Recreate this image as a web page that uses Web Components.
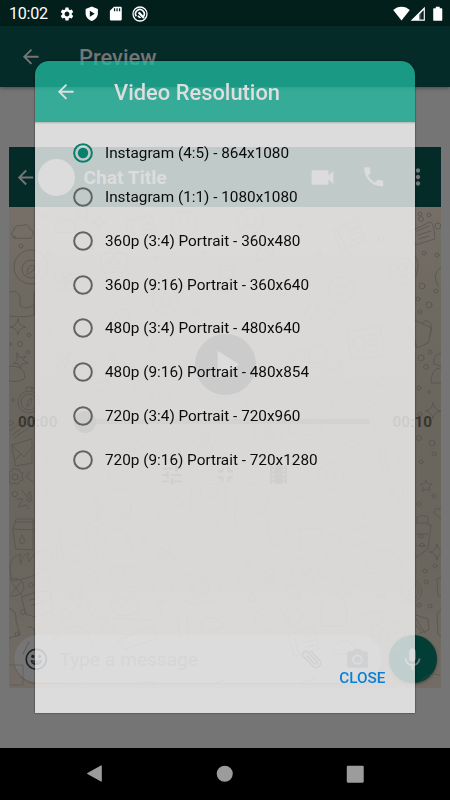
<!DOCTYPE html>
<html lang="en">
<head>
<meta charset="utf-8">
<title>Video Resolution</title>
<style>
html, body { margin: 0; height: 100%; overflow: hidden; background: #000; }
body { font-family: Roboto, "Liberation Sans", sans-serif; }
</style>
</head>
<body>
<app-screen></app-screen>
<script>
const ICONS = {
  back: '<path d="M20 11H7.83l5.59-5.59L12 4l-8 8 8 8 1.41-1.41L7.83 13H20z"/>',
  video: '<path d="M17 10.5V7c0-.55-.45-1-1-1H4c-.55 0-1 .45-1 1v10c0 .55.45 1 1 1h12c.55 0 1-.45 1-1v-3.500l4 4v-11z"/>',
  call: '<path d="M6.62 10.79c1.44 2.83 3.76 5.14 6.59 6.59l2.2-2.2c.27-.27.67-.36 1.02-.24 1.12.37 2.33.57 3.57.57.55 0 1 .45 1 1V20c0 .55-.45 1-1 1C10.61 21 3 13.39 3 4c0-.55.45-1 1-1h3.5c.55 0 1 .45 1 1 0 1.25.2 2.45.57 3.57.11.35.03.74-.25 1.02z"/>',
  more: '<path d="M12 8c1.1 0 2-.9 2-2s-.9-2-2-2-2 .9-2 2 .9 2 2 2zm0 2c-1.1 0-2 .9-2 2s.9 2 2 2 2-.9 2-2-.9-2-2-2zm0 6c-1.1 0-2 .9-2 2s.9 2 2 2 2-.9 2-2-.9-2-2-2z"/>',
  tune: '<path d="M3 17v2h6v-2zM3 5v2h10V5zm10 16v-2h8v-2h-8v-2h-2v6zM7 9v2H3v2h4v2h2V9zm14 4v-2H11v2zm-6-4h2V7h4V5h-4V3h-2z"/>',
  shrink: '<path d="M5 16h3v3h2v-5H5zm3-8H5v2h5V5H8zm6 11h2v-3h3v-2h-5zm2-11V5h-2v5h5V8z"/>',
  film: '<path d="M18 3v2h-2V3H8v2H6V3H4v18h2v-2h2v2h8v-2h2v2h2V3zM8 17H6v-2h2zm0-4H6v-2h2zm0-4H6V7h2zm10 8h-2v-2h2zm0-4h-2v-2h2zm0-4h-2V7h2z"/>',
  mic: '<path d="M12 14c1.66 0 2.99-1.34 2.99-3L15 5c0-1.66-1.34-3-3-3S9 3.34 9 5v6c0 1.66 1.34 3 3 3zm5.300-3c0 3-2.540 5.100-5.300 5.100S6.700 14 6.700 11H5c0 3.410 2.720 6.230 6 6.720V21h2v-3.280c3.280-.48 6-3.300 6-6.720z"/>',
  smile: '<path fill-rule="evenodd" d="M12 .5a11.500 11.500 0 1 0 0 23 11.500 11.500 0 0 0 0-23zm0 1.700a9.800 9.800 0 1 1 0 19.600 9.800 9.800 0 0 1 0-19.600z"/><circle cx="8.300" cy="9" r="1.700"/><circle cx="15.700" cy="9" r="1.700"/><path d="M6 12.900q6 1.600 12 0c-.5 7.300-11.500 7.300-12 0zm2 2.200q4 .8 8 0-.2-.5-.1-.8-3.900.7-7.800 0z" fill-rule="evenodd"/>',
  clip: '<g transform="rotate(-45 12 12)" fill="none" stroke="currentColor" stroke-width="1.600" stroke-linecap="round"><path d="M16.500 5.800v12a4.500 4.500 0 0 1-9 0V4.300a3.100 3.100 0 0 1 6.200 0v12.600a1.600 1.600 0 0 1-3.200 0V6"/></g>',
  camera: '<circle cx="12" cy="12" r="3.200"/><path d="M9 2L7.170 4H4c-1.100 0-2 .9-2 2v12c0 1.100.9 2 2 2h16c1.100 0 2-.9 2-2V6c0-1.100-.9-2-2-2h-3.170L15 2zm3 15c-2.760 0-5-2.240-5-5s2.240-5 5-5 5 2.240 5 5-2.240 5-5 5z"/>',
  play: '<path d="M8 5v14l11-7z"/>',
  gear: '<path d="M19.140 12.940c.04-.3.060-.61.060-.94s-.02-.64-.07-.94l2.030-1.580c.18-.14.23-.41.120-.61l-1.920-3.320c-.12-.22-.37-.29-.59-.22l-2.390.96c-.5-.38-1.030-.7-1.620-.94L14.400 2.810c-.04-.24-.24-.41-.48-.41h-3.840c-.24 0-.43.17-.47.41L9.250 5.350c-.59.24-1.130.57-1.620.94l-2.390-.96c-.22-.08-.47 0-.59.22L2.740 8.870c-.12.210-.08.470.12.610l2.030 1.580c-.05.3-.09.630-.09.940s.02.640.070.940l-2.030 1.580c-.18.14-.23.410-.12.610l1.920 3.320c.12.220.370.290.590.220l2.390-.96c.5.380 1.030.7 1.620.940l.36 2.540c.05.240.240.410.480.410h3.840c.24 0 .44-.17.470-.41l.36-2.540c.59-.24 1.130-.56 1.620-.94l2.390.96c.22.080.470 0 .59-.22l1.920-3.320c.12-.22.070-.47-.12-.61zM12 15.600c-1.980 0-3.600-1.620-3.600-3.600s1.620-3.600 3.600-3.600 3.600 1.620 3.600 3.600-1.620 3.600-3.600 3.600z"/>',
  shield: '<path fill-rule="evenodd" d="M12 .8L2.500 4.500V11c0 6 4 10.500 9.500 12.300 5.500-1.800 9.500-6.300 9.500-12.300V4.500zM9 7.300l7.600 4.700L9 16.700z"/>',
  sd: '<path fill-rule="evenodd" d="M20 1H9.500L3 7.500V21c0 1.100.9 2 2 2h15c1.100 0 2-.9 2-2V3c0-1.100-.9-2-2-2zM11.500 8.500h-2v-5h2zm4 0h-2v-5h2zm4 0h-2v-5h2z"/>',
  radar: '<circle cx="12" cy="12" r="10.500" fill="none" stroke="currentColor" stroke-width="1.900"/><path d="M6.500 15.500A6.500 6.500 0 1 1 16.800 16" fill="none" stroke="currentColor" stroke-width="2.500"/><path d="M8.500 10.500l3-1.800 7.500 8-2.200 2.400z"/><path d="M8 15.500q3 4 6 2.300l-4-4z"/>',
  wifi: '<path d="M12 22L.3 7.200C3.500 4.300 7.500 2.600 12 2.600s8.500 1.700 11.700 4.600z"/>',
  signal: '<path fill-rule="evenodd" d="M23 1v22H1zm-1.800 5.300L14.500 13v7.800h6.700z"/><path d="M14.500 13l3-3v10.800h-3z" opacity=".25"/>',
  battery: '<path d="M17.500 3.500H15V1H9v2.500H6.500C5.700 3.500 5 4.200 5 5v16.500c0 .8.700 1.500 1.500 1.500h11c.8 0 1.500-.7 1.500-1.500V5c0-.8-.7-1.500-1.500-1.500z"/>',
  navBack: '<path d="M20 2.500v19a.8.800 0 0 1-1.200.7L1.800 12.600a.7.700 0 0 1 0-1.200l17-9.600a.8.800 0 0 1 1.200.7z"/>',
  navHome: '<circle cx="12" cy="12" r="11"/>',
  navRecent: '<rect x="1" y="1" width="22" height="22" rx="1.500"/>'
};

function define(name, html, after) {
  const t = document.createElement('template');
  t.innerHTML = html;
  customElements.define(name, class extends HTMLElement {
    constructor() {
      super();
      this.attachShadow({ mode: 'open' }).append(t.content.cloneNode(true));
    }
    connectedCallback() { if (after) after(this, this.shadowRoot); }
  });
}

define('ui-icon', `
<style>:host{display:block;flex:none;width:var(--s,24px);height:var(--s,24px)}svg{display:block;width:100%;height:100%;fill:currentColor;overflow:visible}</style>
<svg viewBox="0 0 24 24"></svg>`, (el, root) => {
  el.style.setProperty('--s', (el.getAttribute('size') || 24) + 'px');
  root.querySelector('svg').innerHTML = ICONS[el.getAttribute('name')];
});

define('status-bar', `
<style>
:host{display:flex;align-items:center;height:26px;box-sizing:border-box;padding:1px 5px 0 9px;background:#021f1c;color:#fff}
.time{font-size:16.100px;line-height:20px;padding-top:1px;width:50px;letter-spacing:-.25px}
.l,.r{display:flex;align-items:center}.l{gap:8.700px}.r{margin-left:auto}
.r ui-icon:last-child{margin-left:4px}
</style>
<span class="time">10:02</span>
<div class="l"><ui-icon name="gear" size="16"></ui-icon><ui-icon name="shield" size="15.500"></ui-icon><ui-icon name="sd" size="15"></ui-icon><ui-icon name="radar" size="16"></ui-icon></div>
<div class="r"><ui-icon name="wifi" size="17"></ui-icon><ui-icon name="signal" size="15.500"></ui-icon><ui-icon name="battery" size="15.500"></ui-icon></div>`);

define('app-bar', `
<style>
:host{display:flex;align-items:center;height:61px;box-sizing:border-box;padding:1px 0 0 19px;gap:36.500px}
.t{font-size:21.900px;line-height:28px;padding-top:1px;font-weight:500;white-space:nowrap}
</style>
<ui-icon name="back" size="23.500"></ui-icon><span class="t"><slot></slot></span>`);

define('chat-header', `
<style>
:host{display:flex;align-items:center;height:60px;box-sizing:border-box;background:#042b28;color:#757575;padding:0 10px 0 5px}
.av{flex:none;width:37px;height:37px;border-radius:50%;background:#757575;margin-left:1px}
.n{font-size:19.200px;font-weight:700;margin-left:8.500px;flex:1;white-space:nowrap}
.call{margin-left:24px}.more{margin-left:19px}
</style>
<ui-icon name="back" size="23"></ui-icon><span class="av"></span><span class="n">Chat Title</span>
<ui-icon name="video" size="29"></ui-icon><ui-icon class="call" name="call" size="25.500"></ui-icon><ui-icon class="more" name="more" size="26"></ui-icon>`);

define('chat-wallpaper', `
<style>:host{display:block;background:linear-gradient(#756f68 0,#6e6961 18%,#6a665e 45%,#6a665e 75%,#726c65 100%)}svg{display:block;width:100%;height:100%;fill:none;stroke:#56524c;stroke-width:1;stroke-linecap:round;stroke-linejoin:round;opacity:.7}.mid,.dots{opacity:.7}</style>
<svg viewBox="9 207 432 481">
<defs>
<path id="star" d="M0-6l1.700 3.800 4.100.4-3 2.800.9 4.100L0 3-3.700 5.100l.9-4.100-3-2.800 4.100-.4z"/>
<path id="spark" d="M0-8q.8 7.200 8 8-7.200.8-8 8-.8-7.200-8-8 7.200-.8 8-8z"/>
<path id="cloud" d="M-8 6q-5-4 0-8 1-6 7-4 7-4 9 3 6 3 1 9z"/>
<g id="cam"><rect x="-13" y="-9" width="26" height="19" rx="4"/><circle r="6"/><circle r="3"/><path d="M-6-9l2-4h8l2 4"/></g>
<g id="flower"><circle r="2.500"/><circle cx="0" cy="-7" r="4"/><circle cx="7" cy="-2" r="4"/><circle cx="4" cy="6" r="4"/><circle cx="-4" cy="6" r="4"/><circle cx="-7" cy="-2" r="4"/></g>
<g id="clock"><circle r="11"/><circle r="8"/><path d="M-2 4l1-5 4-3-1 5z"/><path d="M-3-12v-3h6v3"/></g>
<g id="book"><path d="M-14-8l25-7 5 22-25 7zM-9-6l5 18M1-5l9-2M2 0l9-2M3 5l9-2"/></g>
<g id="face"><circle r="13"/><circle cx="-4" cy="-3" r="1"/><circle cx="4" cy="-3" r="1"/><path d="M-5 3q5 5 10 0"/></g>
<g id="pack"><path d="M-14 20v-25q2-12 14-12t14 12v25q-14 4-28 0zM-14 4q14 5 28 0M-5-17q0-6 5-6t5 6M-14 3h-5v14h5M14 3h5v14h-5"/></g>
<g id="cup"><path d="M-7-10h14l-2 22h-10zM-8-10l1-4h14l1 4M-6-2h12M-6 5h11"/></g>
<g id="leaf"><path d="M-10 9q-3-16 16-19 4 16-16 19zM-10 9L2-5"/></g>
<g id="note"><path d="M-4 5V-5l9-2V3"/><circle cx="-6" cy="5" r="2"/><circle cx="3" cy="3" r="2"/></g>
</defs>
<g class="left">
<use href="#cloud" x="22" y="232"/><circle cx="21" cy="246" r="2"/><circle cx="14" cy="237" r="1"/>
<circle cx="31" cy="267" r="17"/><circle cx="31" cy="269" r="9"/><path d="M27 272q2-9 8-6-1 6-8 8"/>
<path d="M10 292q8-3 10 6v8q7 4 14-1v10q-7 3-24 1M34 292v17"/>
<use href="#spark" x="18" y="327"/><circle cx="20" cy="344" r="2.500"/><circle cx="10" cy="344" r="1.500"/><circle cx="29" cy="335" r="1.800"/><circle cx="28" cy="352" r="1.800"/>
<path d="M17 353l3 5 6-2-3 4 5 3-6 1-2 5-2-6-5 1 4-4z"/>
<path d="M9 366q16-1 16 12-6 5-16 3z"/><circle cx="32" cy="388" r="1"/><circle cx="13" cy="400" r="1.500"/>
<use href="#clock" x="29" y="402"/><path d="M9 431l18-12 3 3-18 13M14 438l16-11"/><circle cx="11" cy="423" r="2.300"/>
<path d="M12 445l20-6v24l-16 3zM12 445l12 12 9-11M14 461l7-7"/>
<path d="M14 468l2 2 3-1 1 3 3 1-1 3 1 4-3 1-2 3-4-1-3 1-2-3v-9l3-1z"/><circle cx="15" cy="477" r="3"/><path d="M30 471l-4 6 7 5"/>
<circle cx="15" cy="494" r="2.800"/><circle cx="29" cy="500" r="2"/><path d="M22 490l5 7 3-6 2 8M17 499h6l-5 8 8-2 3 4"/>
<path d="M13 529l3-10h17v31l-17-1zM13 529l21 1M16 522h18"/><path d="M22 535q-5 8 0 9 5-1 0-9"/>
<path d="M10 568q-1-11 11-14-3 5 0 10 0-9 8-11-3 5 0 9 5-10 12-11l9 2q6 8-3 16-17 10-35 12z"/>
<path d="M10 579q14-3 14 9-2 9-14 8M12 583l10 13M22 581l-10 12"/><circle cx="31" cy="585" r="2.300"/>
<path d="M22 597l14-5 14-1 3 20-18 6-9-3zM30 600l12-3M32 605l12-3"/><circle cx="23" cy="612" r="2.500"/>
<path d="M9 608q8 2 7 13l4 14-11 3M28 627q8-1 7 8M29 642l-6 12"/><circle cx="17" cy="634" r="2"/>
</g>
<g class="right">
<circle cx="420" cy="214" r="2"/><circle cx="429" cy="215" r="2"/><circle cx="421" cy="219" r="2.500"/><circle cx="438" cy="226" r="3"/>
<path d="M411 231l19-9q4 0 5 17l-20 6zM417 231l12-5M418 235l13-4M419 239l10-3"/>
<circle cx="424" cy="253" r="2"/><circle cx="437" cy="255" r="2"/><path d="M415 256q6 7 1 20M441 267q-10 7-3 19"/><circle cx="422" cy="286" r="3"/><circle cx="436" cy="291" r="2"/><circle cx="418" cy="299" r="2"/><circle cx="429" cy="305" r="3"/><circle cx="420" cy="312" r="2"/>
<path d="M414 320l18 8-4 15-11 5-8-22M422 324q3-7 9 0l-1 12"/>
<circle cx="421" cy="358" r="3"/><circle cx="430" cy="352" r="2"/><circle cx="426" cy="367" r="2.500"/>
<path d="M441 353q-9 3-7 11l7 2M441 368q-10 0-10 15h10"/><circle cx="419" cy="388" r="2"/><circle cx="429" cy="392" r="1.500"/>
<use href="#spark" x="433" y="411"/><circle cx="420" cy="414" r="2"/><circle cx="419" cy="438" r="2.500"/><circle cx="432" cy="443" r="3"/><circle cx="421" cy="462" r="2"/><circle cx="434" cy="454" r="2"/>
<use href="#star" x="426" y="486"/><circle cx="419" cy="504" r="2"/><circle cx="434" cy="496" r="2"/><path d="M441 509q-8-1-7 4l7 6"/>
<path d="M417 523v-6q6-3 11 0v8h3l-3 24-13 9M417 523h11M417 534h11M417 546h10"/><circle cx="422" cy="545" r="2"/><circle cx="421" cy="536" r="2"/>
<use href="#spark" x="437" y="552"/><circle cx="425" cy="571" r="2"/><circle cx="435" cy="566" r="2"/><circle cx="426" cy="582" r="2"/><circle cx="430" cy="606" r="2"/><circle cx="419" cy="605" r="2"/><path d="M441 577l-4 2 1 17h3M441 609l-4 5 1 20 3 3"/>
<path d="M416 615l12 4 1 11-9 3M416 619l9 14M416 625l5 6"/>
</g>
<g class="mid">
<use href="#cloud" x="65" y="226"/><use href="#note" x="82" y="214"/><use href="#face" x="184" y="224"/><use href="#spark" x="99" y="222"/>
<use href="#book" x="140" y="230"/><use href="#face" x="251" y="221"/><use href="#cam" x="114" y="262"/><use href="#flower" x="66" y="280"/>
<use href="#cup" x="227" y="280"/><use href="#book" x="348" y="236" transform="rotate(-8 348 236)"/><use href="#face" x="402" y="271"/><use href="#face" x="341" y="290"/>
<use href="#leaf" x="267" y="252"/><use href="#face" x="165" y="301"/><use href="#leaf" x="122" y="318"/><use href="#flower" x="65" y="361"/>
<path d="M75 389l35-9v8l-34 9zM79 402l37-10M304 314l8-12 7 4-9 14M320 317l7-9 8 5-9 11"/>
<g transform="rotate(-10 367 350)"><rect x="350" y="329" width="34" height="29" rx="3"/><path d="M355 336h11v13h-11zM370 336h10M370 341h10M370 346h10"/></g>
<use href="#clock" x="161" y="397"/><use href="#star" x="382" y="382"/><use href="#cam" x="268" y="433"/><use href="#leaf" x="298" y="359"/>
<path d="M310 350q8-12 16 0v13h-16zM327 356q7-6 12 1l2 12h-16M346 381q7 1 10 12l28 16q-1 7-9 3l-24-18q-8-2-5-13z"/>
<use href="#pack" x="303" y="413"/><use href="#flower" x="205" y="443"/><use href="#spark" x="352" y="444"/><use href="#book" x="393" y="458"/>
<use href="#face" x="331" y="476"/><use href="#leaf" x="118" y="470"/><use href="#star" x="137" y="447"/>
<path d="M96 494q4-6 11-4l24-1v28h-31z"/><circle cx="103" cy="503" r="9"/><circle cx="123" cy="509" r="8"/><circle cx="103" cy="503" r="5"/><circle cx="123" cy="509" r="5"/>
<use href="#pack" x="74" y="540" transform="rotate(-12 74 540)"/><use href="#spark" x="97" y="524"/><use href="#star" x="178" y="502"/>
<circle cx="165" cy="515" r="8"/><circle cx="165" cy="515" r="5"/><path d="M169 523l7 9 3-3-6-9M192 484h34v28h-36z"/><circle cx="213" cy="493" r="13"/><circle cx="213" cy="493" r="5"/>
<path d="M104 566q-1-19 2-32 11-12 23 0 2 16 9 25l-4 8zM110 569l-1 7h8l1-7M124 570l-1 7h7l1-7"/><circle cx="117" cy="539" r="10"/><path d="M113 541q4 4 8 0"/>
<use href="#flower" x="166" y="554"/><use href="#star" x="94" y="576"/><use href="#note" x="77" y="592"/><circle cx="88" cy="562" r="3"/><circle cx="96" cy="561" r="2.500"/>
<path d="M94 617l-7-11q5-17 23-20l10 2-10 17q3 11 15 11 17-3 12-14l-12-15q17-4 33 15l4 10-11 8zM118 603q0-4 4-4 3-2 5 2l-5 6z"/>
<path d="M172 589q5-14 17-14l14 2q19 0 17 12-3 12-20 15-20 0-28-15z"/><circle cx="199" cy="588" r="10"/><circle cx="199" cy="588" r="7"/>
<path d="M237 532q-8-28 8-47 15-5 24 9l-5 18-24 9M300 481q14 1 15 15 15-3 16 11-1 15-18 23l-14-1M268 520q5-11 13-1l6 16-4 12-13-4zM299 528l24 1-10 17-13 4z"/>
<circle cx="393" cy="494" r="15"/><circle cx="393" cy="494" r="11"/><circle cx="393" cy="491" r="3"/><path d="M386 499q7-8 14 0M343 500l22-19M346 504l28-22"/>
<path d="M329 535l55-13v16l-52 12z"/><path d="M347 535v7l6-4zM335 540l5 4v-9z"/>
<path d="M365 563q2-11 18-13 14 1 18 13-20 4-36 0zM364 567q20 5 38 0M365 572q9 4 17 0 8 5 18-1M367 577q1 5 15 4 15 1 17-4"/>
<use href="#cam" x="305" y="569"/><path d="M341 583q4-3 4-10 7-11 12 0v12zM347 586q2 4 5 0"/><use href="#star" x="240" y="580"/><use href="#flower" x="270" y="579"/>
<use href="#spark" x="314" y="587"/><use href="#star" x="381" y="593"/><circle cx="367" cy="592" r="3"/><circle cx="348" cy="593" r="3"/><use href="#clock" x="411" y="591"/>
<use href="#star" x="252" y="597"/><path d="M285 585q17-2 14 14-12 2-14-14zM285 612q7-10 17 1 0 10-9 12-10-2-8-13zM322 601q10-15 22-1 7 21-1 26h-22zM255 625q-3-17 17-20 16 9 17 15l-20 12z"/>
<path d="M355 621q14-13 29-9 1 13-12 15v10M54 640q12-22 33-9l5 13M118 640l34-14 5 13-32 10zM177 617l3 20M187 615l1 20M200 620q17-8 24 7l-20 6z"/>
<use href="#star" x="66" y="613"/><use href="#spark" x="107" y="627"/><use href="#book" x="303" y="642"/><use href="#cloud" x="344" y="648"/><use href="#face" x="393" y="636"/>
<path d="M9 665h14v20H11M42 683h18M75 680q5 8 12 2M139 682h18M214 684l10-4M300 683l15-4M366 683q12-8 20-1M396 676l12 11M418 684q10-13 22-9"/>
</g>
<g class="dots">
<circle cx="46" cy="216" r="2"/><circle cx="49" cy="253" r="2"/><circle cx="91" cy="247" r="2"/><circle cx="156" cy="258" r="2"/><circle cx="204" cy="253" r="2"/><circle cx="300" cy="225" r="2"/><circle cx="319" cy="254" r="2"/><circle cx="381" cy="238" r="3"/><circle cx="283" cy="294" r="2"/><circle cx="197" cy="312" r="2"/><circle cx="151" cy="346" r="2"/><circle cx="113" cy="358" r="3"/><circle cx="50" cy="333" r="2"/><circle cx="134" cy="388" r="2"/><circle cx="247" cy="404" r="2"/><circle cx="333" cy="405" r="2"/><circle cx="394" cy="421" r="2"/><circle cx="375" cy="427" r="2"/><circle cx="75" cy="440" r="2"/><circle cx="47" cy="462" r="2"/><circle cx="242" cy="462" r="2"/><circle cx="299" cy="467" r="2"/><circle cx="46" cy="492" r="2"/><circle cx="149" cy="533" r="3"/><circle cx="144" cy="540" r="2"/><circle cx="217" cy="522" r="2"/><circle cx="300" cy="497" r="2"/><circle cx="365" cy="515" r="2"/><circle cx="384" cy="512" r="2"/><circle cx="330" cy="557" r="3"/><circle cx="325" cy="578" r="2"/><circle cx="248" cy="566" r="2"/><circle cx="50" cy="580" r="2"/><circle cx="42" cy="566" r="3"/><circle cx="154" cy="588" r="2"/><circle cx="163" cy="602" r="2"/><circle cx="78" cy="607" r="2"/>
</g></svg>`);

define('player-controls', `
<style>
:host{display:grid;grid-template-rows:61px 1fr;justify-items:center;color:#38352f}
.p{width:61px;height:61px;border-radius:50%;background:#2e2e2e;display:grid;place-items:center;color:#757575}
.rest{width:100%;display:flex;flex-direction:column}
.seek{display:flex;align-items:center;justify-content:space-between;margin-top:16.500px;height:20px;padding:0 9px;font-size:15.300px;font-weight:700}
.bar{display:flex;align-items:center;width:296px;margin-right:7px}
.k{width:22px;height:22px;border-radius:50%;background:#3a3a38}.ln{flex:1;height:5.500px;border-radius:0 3px 3px 0;background:#504e4a}
.ic{display:flex;justify-content:center;gap:28px;margin-top:30px;color:#42403c}
</style>
<div class="p"><ui-icon name="play" size="47"></ui-icon></div>
<div class="rest"><div class="seek"><span>00:00</span><span class="bar"><span class="k"></span><span class="ln"></span></span><span>00:10</span></div>
<div class="ic"><ui-icon name="tune" size="26"></ui-icon><ui-icon name="shrink" size="25"></ui-icon><ui-icon name="film" size="25"></ui-icon></div></div>`);

define('message-bar', `
<style>
:host{display:flex;align-items:center;gap:6.500px;height:48px}
.f{width:368px;height:48px;box-sizing:border-box;border-radius:24px;background:#757575;display:flex;align-items:center;padding:0 12px 0 11px;box-shadow:0 1px 1px #0003;color:#44494e}
.t{flex:1;margin-left:12px;font-size:19.100px;letter-spacing:.03px;color:#5a5a5a;padding-top:1px}
.cam{margin-left:21px}
.m{width:48px;height:48px;border-radius:50%;background:#023d36;color:#757575;display:grid;place-items:center;box-shadow:0 1px 3px #0006}
</style>
<div class="f"><ui-icon name="smile" size="22.500" style="color:#1c2125"></ui-icon><span class="t">Type a message</span><ui-icon name="clip" size="24"></ui-icon><ui-icon class="cam" name="camera" size="25"></ui-icon></div>
<div class="m"><ui-icon name="mic" size="27"></ui-icon></div>`);

define('chat-preview', `
<style>
:host{display:flex;flex-direction:column;height:541px;margin:60px 9px 0}
.body{flex:1;display:grid;min-height:0}
chat-wallpaper,.o{grid-area:1/1;min-height:0}
.o{display:flex;flex-direction:column;justify-content:space-between;padding:127px 0 5px}
message-bar{padding-left:5px}
</style>
<chat-header></chat-header>
<div class="body"><chat-wallpaper></chat-wallpaper><div class="o"><player-controls></player-controls><message-bar></message-bar></div></div>`);

define('radio-option', `
<style>
:host{display:flex;align-items:center;height:43.750px;gap:12px;color:#0b0b0b;font-size:15.320px;white-space:nowrap}
.r{display:block;width:20px;height:20px;color:#626262}
.r svg{display:block}.dot{display:none}
:host([checked]) .r{color:#077f6d}
:host([checked]) .dot{display:block}
</style><span class="r"><svg width="20" height="20" viewBox="0 0 20 20"><circle cx="10" cy="10" r="8.850" fill="none" stroke="currentColor" stroke-width="2"/><circle class="dot" cx="10" cy="10" r="5.200" fill="currentColor"/></svg></span><span><slot></slot></span>`);

define('modal-dialog', `
<style>
:host{position:absolute;z-index:2;left:35px;top:61px;width:380px;height:652px;display:grid;grid-template-rows:61px 1fr;border-radius:14px 14px 0 0;overflow:hidden;box-shadow:0 0 1.500px #000}
app-bar{background:rgb(34 188 163/.76);color:#dedede}
.b{background:rgb(252 252 252/.76);display:flex;flex-direction:column;padding:9.400px 29.500px 25px 38px;box-shadow:inset 0 2px 2px -1px #0003}
.c{margin-top:auto;align-self:flex-end;color:#0b7fd3;font-size:15.300px;line-height:20px;font-weight:500;letter-spacing:.02px}
</style>
<app-bar><slot name="title"></slot></app-bar>
<div class="b"><slot></slot><span class="c">CLOSE</span></div>`);

define('nav-bar', `
<style>:host{display:flex;justify-content:space-around;align-items:center;height:52.500px;box-sizing:border-box;padding:0 30px 0 30px;background:#000;color:#9c9c9c}</style>
<ui-icon name="navBack" size="19"></ui-icon><ui-icon name="navHome" size="17.500"></ui-icon><ui-icon name="navRecent" size="18.500"></ui-icon>`);

define('app-screen', `
<style>
:host{display:flex;flex-direction:column;width:450px;height:800px;position:relative;overflow:hidden;background:#757575}
.top{background:#042b28;color:#757575;box-shadow:0 1px 4px #0006}
nav-bar{margin-top:auto}
</style>
<status-bar></status-bar>
<app-bar class="top">Preview</app-bar>
<chat-preview></chat-preview>
<nav-bar></nav-bar>
<modal-dialog><span slot="title">Video Resolution</span>
<radio-option checked>Instagram (4:5) - 864x1080</radio-option>
<radio-option>Instagram (1:1) - 1080x1080</radio-option>
<radio-option>360p (3:4) Portrait - 360x480</radio-option>
<radio-option>360p (9:16) Portrait - 360x640</radio-option>
<radio-option>480p (3:4) Portrait - 480x640</radio-option>
<radio-option>480p (9:16) Portrait - 480x854</radio-option>
<radio-option>720p (3:4) Portrait - 720x960</radio-option>
<radio-option>720p (9:16) Portrait - 720x1280</radio-option>
</modal-dialog>`);
</script>
</body>
</html>
